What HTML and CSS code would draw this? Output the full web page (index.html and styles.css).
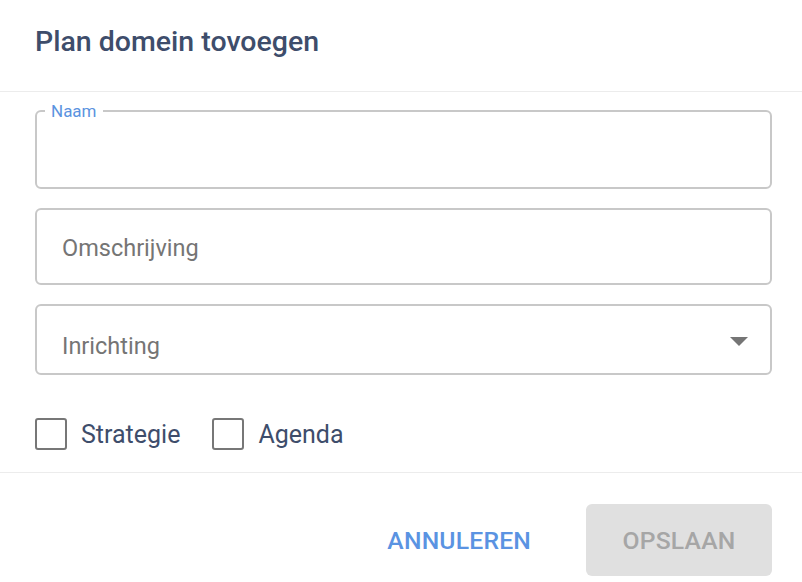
FILE: index.html
```html
<!DOCTYPE html>
<html lang="nl">
<head>
<meta charset="utf-8">
<title>Plan domein tovoegen</title>
<link rel="stylesheet" href="styles.css">
</head>
<body>
<div class="dialog">
  <header class="dialog-header">
    <h1 class="dialog-title">Plan domein tovoegen</h1>
  </header>
  <main class="dialog-content">
    <fieldset class="field field-naam">
      <legend class="field-legend">Naam</legend>
      <div class="field-inner"></div>
    </fieldset>
    <div class="field field-text">
      <span class="field-placeholder">Omschrijving</span>
    </div>
    <div class="field field-select">
      <span class="field-placeholder">Inrichting</span>
      <svg class="select-arrow" width="18" height="9" viewBox="0 0 18 9"><path d="M0 0 L18 0 L9 9 Z" fill="#757575"/></svg>
    </div>
    <div class="checks">
      <label class="check"><span class="check-box"></span><span class="check-label">Strategie</span></label>
      <label class="check"><span class="check-box"></span><span class="check-label">Agenda</span></label>
    </div>
  </main>
  <footer class="dialog-footer">
    <button class="btn btn-text">ANNULEREN</button>
    <button class="btn btn-disabled">OPSLAAN</button>
  </footer>
</div>
</body>
</html>
```
FILE: styles.css
```css
* { box-sizing: border-box; }
html, body { margin: 0; padding: 0; background: #fff; }
body { font-family: Roboto, "Liberation Sans", sans-serif; }

.dialog { width: 802px; height: 582px; background: #fff; overflow: hidden; }

.dialog-header {
  height: 92px;
  padding: 26px 35px 0 35px;
  border-bottom: 1px solid #ececec;
}
.dialog-title {
  margin: 0;
  font-size: 28.5px;
  line-height: 32px;
  font-weight: 500;
  color: #3e4d6b;
}

.dialog-content {
  padding: 10px 30px 0 35px;
  display: flex;
  flex-direction: column;
}

.field {
  border: 2px solid #c8c8c8;
  border-radius: 6px;
  margin: 0;
}
.field-naam {
  padding: 0 8px;
  min-width: 0;
}
.field-legend {
  padding: 0 6px;
  font-size: 17px;
  line-height: 18px;
  color: #5b93e0;
}
.field-inner { height: 67px; }

.field-text {
  margin-top: 19px;
  height: 77px;
  padding: 26px 25px 0 25px;
}
.field-select {
  margin-top: 19px;
  height: 71px;
  padding: 28px 22px 0 25px;
  display: flex;
  align-items: flex-start;
  justify-content: space-between;
}
.field-placeholder {
  font-size: 23.5px;
  line-height: 24px;
  color: #757575;
}
.select-arrow { margin-top: 3px; }

.checks {
  display: flex;
  gap: 32px;
  margin-top: 43px;
  height: 32px;
}
.check {
  display: flex;
  align-items: center;
  gap: 14px;
}
.check-box {
  width: 32px;
  height: 32px;
  border: 2px solid #777;
  border-radius: 3px;
}
.check-label {
  font-size: 25px;
  color: #3e4d6b;
}

.dialog-footer {
  margin-top: 22px;
  border-top: 1px solid #ececec;
  padding: 31px 30px 0 0;
  display: flex;
  justify-content: flex-end;
  gap: 39px;
}
.btn {
  height: 72px;
  border: none;
  border-radius: 6px;
  font-family: Roboto, "Liberation Sans", sans-serif;
  font-size: 24.7px;
  font-weight: 500;
  letter-spacing: 0.2px;
  background: transparent;
  padding: 0 16px;
}
.btn-text { color: #5a93e2; }
.btn-disabled {
  width: 186px;
  background: #e0e0e0;
  color: #a6a6a6;
}
```
